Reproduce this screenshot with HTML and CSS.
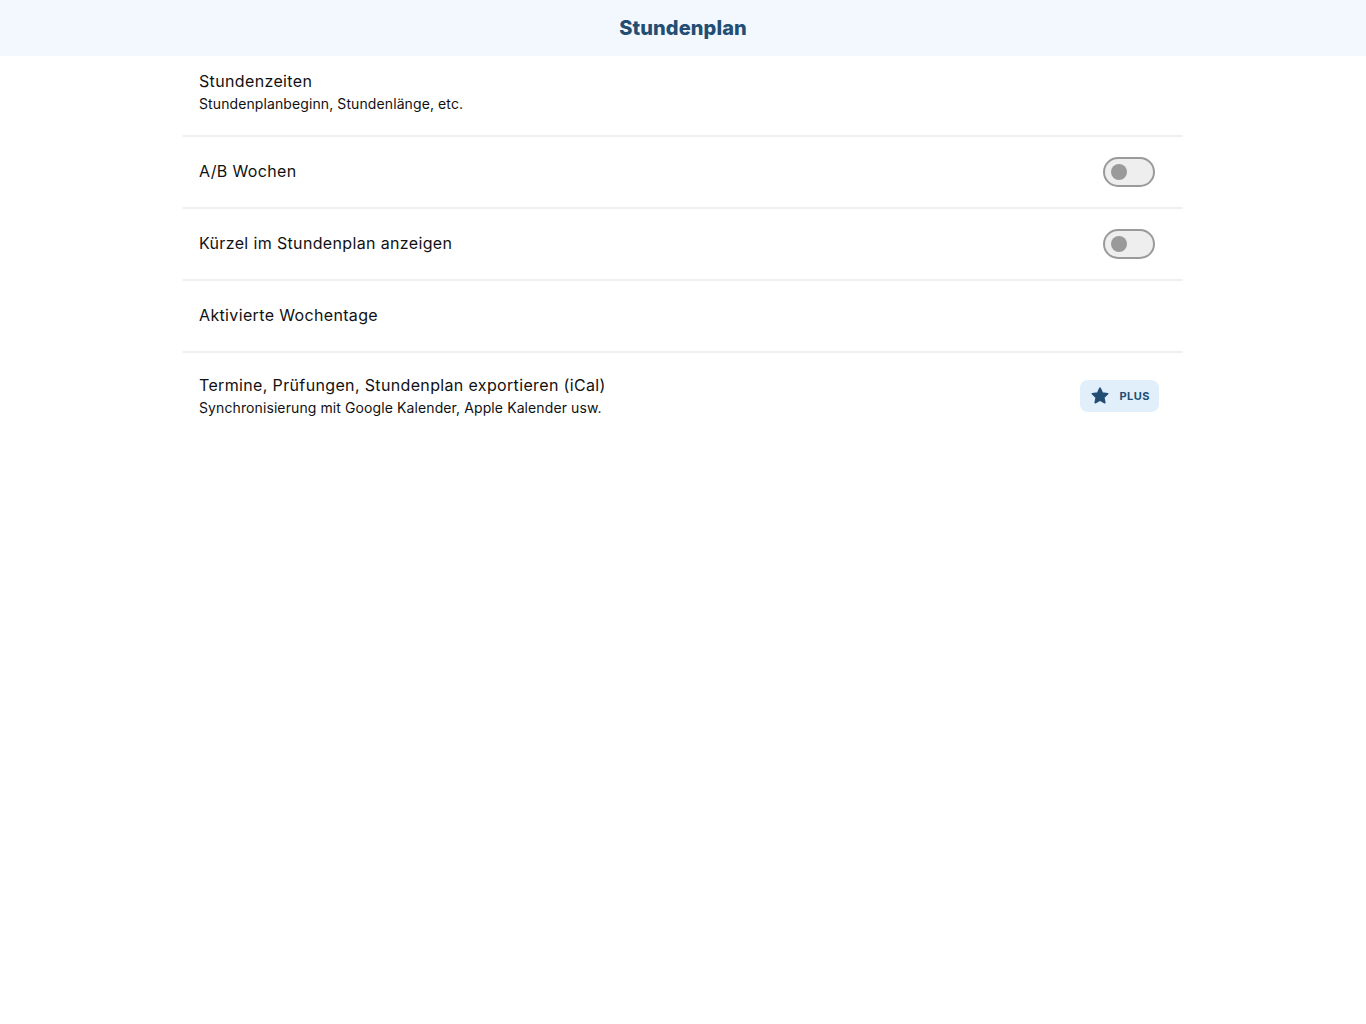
FILE: index.html
```html
<!DOCTYPE html>
<html lang="de">
<head>
<meta charset="utf-8">
<title>Stundenplan</title>
<link rel="stylesheet" href="styles.css">
</head>
<body>
<header class="topbar">
  <h1 class="title">Stundenplan</h1>
</header>
<main class="list">
  <div class="row row-tall">
    <div class="texts">
      <div class="label">Stundenzeiten</div>
      <div class="sub">Stundenplanbeginn, Stundenlänge, etc.</div>
    </div>
  </div>
  <div class="row">
    <div class="texts"><div class="label">A/B Wochen</div></div>
    <span class="toggle"><span class="knob"></span></span>
  </div>
  <div class="row">
    <div class="texts"><div class="label">Kürzel im Stundenplan anzeigen</div></div>
    <span class="toggle"><span class="knob"></span></span>
  </div>
  <div class="row">
    <div class="texts"><div class="label">Aktivierte Wochentage</div></div>
  </div>
  <div class="row row-tall row-last">
    <div class="texts">
      <div class="label">Termine, Prüfungen, Stundenplan exportieren (iCal)</div>
      <div class="sub">Synchronisierung mit Google Kalender, Apple Kalender usw.</div>
    </div>
    <span class="badge">
      <svg class="star" viewBox="0 0 24 24" width="20" height="20"><path d="M12 2.6l2.8 5.9 6.4.8-4.7 4.4 1.2 6.3L12 16.9l-5.7 3.1 1.2-6.3-4.7-4.4 6.4-.8z" fill="#234e74" stroke="#234e74" stroke-width="2" stroke-linejoin="round"/></svg>
      <span class="badge-text">PLUS</span>
    </span>
  </div>
</main>
</body>
</html>
```
FILE: styles.css
```css
html, body {
  margin: 0;
  padding: 0;
  background: #ffffff;
  font-family: Inter, "Noto Sans", "Liberation Sans", sans-serif;
  color: #111;
}
.topbar {
  height: 56px;
  background: #f3f8fe;
  display: flex;
  align-items: center;
  justify-content: center;
}
.title {
  margin: 0;
  font-size: 20px;
  font-weight: 800;
  color: #234e74;
  letter-spacing: 0.1px;
}
.list {
  max-width: 1000px;
  margin: 0 auto;
}
.row {
  height: 68px;
  border-bottom: 2px solid #f0f0f0;
  display: flex;
  align-items: center;
  justify-content: space-between;
  padding: 0 28px 2px 16px;
}
.row-tall {
  height: 71px;
  padding-bottom: 8px;
}
.row-last {
  border-bottom: none;
  height: 86px;
  padding-bottom: 2px;
  padding-right: 24px;
}
.label {
  font-size: 16px;
  line-height: 22px;
  letter-spacing: 0.35px;
}
.sub {
  font-size: 14px;
  line-height: 20px;
  margin-top: 2px;
  letter-spacing: 0.1px;
}
.toggle {
  height: 26px;
  width: 42px;
  margin-top: 2px;
  border: 2px solid #9a9a9a;
  border-radius: 15px;
  background: #eeeeee;
  display: flex;
  align-items: center;
  padding-left: 6px;
}
.knob {
  width: 16px;
  height: 16px;
  border-radius: 50%;
  background: #9a9a9a;
}
.badge {
  display: flex;
  align-items: center;
  gap: 9px;
  height: 32px;
  padding: 0 9px 0 10px;
  background: #e1effb;
  border-radius: 8px;
}
.star { display: block; }
.badge-text {
  font-size: 11px;
  font-weight: 700;
  color: #234e74;
  letter-spacing: 0.5px;
}
```
